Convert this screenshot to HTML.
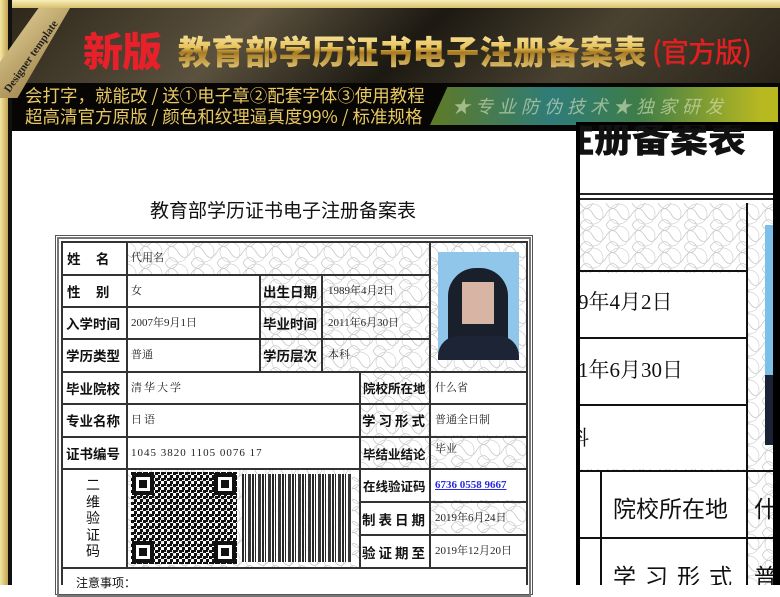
<!DOCTYPE html>
<html><head><meta charset="utf-8"><style>
*{margin:0;padding:0;box-sizing:border-box}
body{width:780px;height:585px;overflow:hidden;background:#fff;position:relative;font-family:"Liberation Sans","Noto Sans CJK SC",sans-serif}
.a{position:absolute}
.hl{position:absolute;height:2px;background:#333}
.vl{position:absolute;width:2px;background:#333}
.lb{position:absolute;font-size:13.5px;font-weight:bold;color:#111;font-family:"Noto Sans CJK SC",sans-serif;line-height:32px;white-space:nowrap}
.l5{font-size:12.5px}
.vv{position:absolute;font-size:11px;color:#222;font-family:"Liberation Serif","Noto Serif CJK SC",serif;line-height:32px;white-space:nowrap}
.gold{background:linear-gradient(#fff6c8,#e8c25a 45%,#a87a20 55%,#f4dc8a);-webkit-background-clip:text;background-clip:text;color:transparent}
</style></head><body>
<svg width="0" height="0" style="position:absolute"><defs>
<pattern id="g" width="26" height="22" patternUnits="userSpaceOnUse">
<path d="M0 11 Q6.5 0 13 11 T26 11 M0 22 Q6.5 11 13 22 T26 22 M0 0 Q6.5 11 13 0 T26 0" fill="none" stroke="#c8c8c8" stroke-width="0.8"/>
<circle cx="13" cy="11" r="10" fill="none" stroke="#d2d2d2" stroke-width="0.7"/>
</pattern>
<pattern id="q" width="6" height="6" patternUnits="userSpaceOnUse">
<rect width="3" height="3" fill="#111"/><rect x="3" y="3" width="3" height="3" fill="#111"/><rect x="3" y="0" width="2" height="2" fill="#111"/>
</pattern>
</defs></svg>

<div class="a" style="left:0;top:0;width:780px;height:131px;background:linear-gradient(135deg,#2a2418,#5b513e 30%,#1c1912 50%,#4a4231 70%,#211d15)"></div>
<div class="a" style="left:0;top:0;width:780px;height:8px;background:linear-gradient(#f8efb9,#d8c06e)"></div>
<div class="a" style="left:0;top:0;width:8px;height:585px;background:linear-gradient(90deg,#f3e7a6,#c5a650)"></div>
<div class="a" style="left:8px;top:0;width:4px;height:585px;background:#111"></div>
<div class="a" style="left:12px;top:83px;width:768px;height:48px;background:#070604"></div>
<div class="a" style="left:0;top:8px;width:70px;height:90px;background:linear-gradient(135deg,#e9d9a0,#8a6a30);clip-path:polygon(55% 0,100% 0,25% 100%,0 100%,0 60%)"></div>
<div class="a" style="left:2px;font:bold 11px 'Liberation Serif',serif;color:#222;transform:rotate(-55deg);transform-origin:left top;top:88px;white-space:nowrap">Designer template</div>
<div class="a" style="left:83px;top:24px;font:900 40px/50px 'Noto Sans CJK SC',sans-serif;color:#e8202a;letter-spacing:-1px;white-space:nowrap">新版</div>
<div class="a" style="left:178px;top:27px;font:900 33px/46px 'Noto Sans CJK SC',sans-serif;white-space:nowrap;letter-spacing:0.5px"><span class="gold">教育部学历证书电子注册备案表</span></div>
<div class="a" style="left:652px;top:31px;font:500 28px/40px 'Noto Sans CJK SC',sans-serif;color:#e02020;white-space:nowrap;letter-spacing:-1px">(官方版)</div>
<div class="a" style="left:25px;top:85px;font:17.5px/21px 'Noto Sans CJK SC',sans-serif;color:#e8c862;white-space:nowrap">会打字，就能改 / 送①电子章②配套字体③使用教程<br>超高清官方原版 / 颜色和纹理逼真度99% / 标准规格</div>
<div class="a" style="left:430px;top:87px;width:348px;height:38px;background:linear-gradient(90deg,#5f7a25,#2f7c7a 35%,#3e7c48 60%,#b8b820 95%);clip-path:polygon(5% 0,100% 0,100% 100%,0 100%);font:italic 18px/38px 'Noto Sans CJK SC',sans-serif;color:rgba(220,230,190,.6);padding-left:22px;letter-spacing:5px;white-space:nowrap">★专业防伪技术★独家研发</div>

<div class="a" style="left:12px;top:131px;width:564px;height:454px;background:#fff"></div>
<div class="a" style="left:150px;top:196px;font:19px 'Noto Sans CJK SC',sans-serif;color:#111">教育部学历证书电子注册备案表</div>
<div class="a" style="left:55px;top:235px;width:478px;height:360px;border:1px solid #555"></div>
<div class="a" style="left:57px;top:237px;width:474px;height:360px;border:2px solid #777"></div>
<svg class="a" style="left:61px;top:241px" width="467" height="344"><rect width="467" height="344" fill="url(#g)"/>
<rect x="2" y="33" width="196" height="97" fill="#fff"/><rect x="2" y="130" width="296" height="97" fill="#fff"/><rect x="2" y="2" width="64" height="31" fill="#fff"/><rect x="370" y="130" width="97" height="64" fill="#fff"/><rect x="2" y="227" width="64" height="100" fill="#fff"/><rect x="298" y="227" width="72" height="100" fill="#fff"/><rect x="370" y="227" width="97" height="32" fill="#fff"/><rect x="370" y="292" width="97" height="35" fill="#fff"/><rect x="2" y="327" width="465" height="17" fill="#fff"/>
</svg>
<div class="a" style="left:438px;top:252px;width:81px;height:108px;background:#8fc6ea;overflow:hidden">
<div class="a" style="left:10px;top:16px;width:60px;height:90px;background:#1a1f2c;border-radius:28px 28px 6px 6px"></div>
<div class="a" style="left:24px;top:30px;width:32px;height:42px;background:#d8b4a4"></div>
<div class="a" style="left:0;top:84px;width:81px;height:24px;background:#1c2436;border-radius:20px 20px 0 0"></div>
</div>
<div class="hl" style="left:61px;top:241px;width:467px"></div>
<div class="hl" style="left:61px;top:274px;width:368px"></div>
<div class="hl" style="left:61px;top:306px;width:368px"></div>
<div class="hl" style="left:61px;top:338px;width:368px"></div>
<div class="hl" style="left:61px;top:371px;width:467px"></div>
<div class="hl" style="left:61px;top:403px;width:467px"></div>
<div class="hl" style="left:61px;top:436px;width:467px"></div>
<div class="hl" style="left:61px;top:468px;width:467px"></div>
<div class="hl" style="left:359px;top:501px;width:169px"></div>
<div class="hl" style="left:359px;top:534px;width:169px"></div>
<div class="hl" style="left:61px;top:567px;width:467px"></div>
<div class="vl" style="left:61px;top:241px;height:344px"></div>
<div class="vl" style="left:526px;top:241px;height:344px"></div>
<div class="vl" style="left:126px;top:241px;height:326px"></div>
<div class="vl" style="left:259px;top:274px;height:97px"></div>
<div class="vl" style="left:321px;top:274px;height:97px"></div>
<div class="vl" style="left:429px;top:241px;height:326px"></div>
<div class="vl" style="left:359px;top:371px;height:196px"></div>
<div class="lb" style="left:67px;top:242px">姓&nbsp;&nbsp;&nbsp;&nbsp;&nbsp;名</div>
<div class="lb" style="left:67px;top:275px">性&nbsp;&nbsp;&nbsp;&nbsp;&nbsp;别</div>
<div class="lb" style="left:66px;top:307px">入学时间</div>
<div class="lb" style="left:66px;top:339px">学历类型</div>
<div class="lb" style="left:66px;top:372px">毕业院校</div>
<div class="lb" style="left:66px;top:404px">专业名称</div>
<div class="lb" style="left:66px;top:437px">证书编号</div>
<div class="lb" style="left:263px;top:275px">出生日期</div>
<div class="lb" style="left:263px;top:307px">毕业时间</div>
<div class="lb" style="left:263px;top:339px">学历层次</div>
<div class="lb l5" style="left:363px;top:372px">院校所在地</div>
<div class="lb" style="left:362px;top:404px;letter-spacing:3px">学习形式</div>
<div class="lb l5" style="left:363px;top:438px">毕结业结论</div>
<div class="lb l5" style="left:363px;top:470px">在线验证码</div>
<div class="lb" style="left:362px;top:503px;letter-spacing:3px">制表日期</div>
<div class="lb" style="left:362px;top:536px;letter-spacing:3px">验证期至</div>
<div class="a" style="left:86px;top:477px;font:14px/16.5px 'Noto Sans CJK SC',sans-serif;width:15px;color:#111">二维验证码</div>
<div class="vv" style="left:131px;top:242px">代用名</div>
<div class="vv" style="left:131px;top:275px">女</div>
<div class="vv" style="left:131px;top:307px">2007年9月1日</div>
<div class="vv" style="left:131px;top:339px">普通</div>
<div class="vv" style="left:131px;top:372px;letter-spacing:2px">清华大学</div>
<div class="vv" style="left:131px;top:404px;letter-spacing:2px">日语</div>
<div class="vv" style="left:131px;top:437px;letter-spacing:1px">1045 3820 1105 0076 17</div>
<div class="vv" style="left:328px;top:275px">1989年4月2日</div>
<div class="vv" style="left:328px;top:307px">2011年6月30日</div>
<div class="vv" style="left:328px;top:339px">本科</div>
<div class="vv" style="left:435px;top:372px">什么省</div>
<div class="vv" style="left:435px;top:404px">普通全日制</div>
<div class="vv" style="left:435px;top:434px;line-height:30px">毕业</div>
<div class="vv" style="left:435px;top:469px;color:#2a2ae0;font-weight:bold;text-decoration:underline">6736 0558 9667</div>
<div class="vv" style="left:435px;top:502px">2019年6月24日</div>
<div class="vv" style="left:435px;top:535px">2019年12月20日</div>
<svg class="a" style="left:131px;top:472px" width="106" height="92"><rect width="106" height="92" fill="url(#q)"/>
<rect x="1" y="1" width="22" height="22" fill="#111"/><rect x="5" y="5" width="14" height="14" fill="#fff"/><rect x="8" y="8" width="8" height="8" fill="#111"/>
<rect x="83" y="1" width="22" height="22" fill="#111"/><rect x="87" y="5" width="14" height="14" fill="#fff"/><rect x="90" y="8" width="8" height="8" fill="#111"/>
<rect x="1" y="69" width="22" height="22" fill="#111"/><rect x="5" y="73" width="14" height="14" fill="#fff"/><rect x="8" y="76" width="8" height="8" fill="#111"/>
<rect x="83" y="69" width="22" height="22" fill="#111"/><rect x="87" y="73" width="14" height="14" fill="#fff"/><rect x="90" y="76" width="8" height="8" fill="#111"/></svg>
<div class="a" style="left:242px;top:474px;width:110px;height:88px;background:repeating-linear-gradient(90deg,#111 0 2px,#fff 2px 3px,#111 3px 4px,#fff 4px 6px,#222 6px 9px,#fff 9px 10px),#fff;opacity:.9"></div>
<div class="a" style="left:76px;top:574px;font:12px 'Noto Sans CJK SC',sans-serif;color:#111">注意事项：</div>

<div class="a" style="left:576px;top:122px;width:4px;height:463px;background:#000"></div>
<div class="a" style="left:773px;top:122px;width:7px;height:463px;background:#000"></div>
<div class="a" style="left:576px;top:122px;width:204px;height:3px;background:#000"></div>
<div class="a" style="left:580px;top:125px;width:193px;height:460px;overflow:hidden">
<div class="a" style="left:-24px;top:-17px;font:900 38px 'Noto Sans CJK SC',sans-serif;color:#111;white-space:nowrap">注册备案表</div>
<div class="a" style="left:0;top:68px;width:193px;height:2px;background:#222"></div>
<div class="a" style="left:0;top:73px;width:193px;height:2px;background:#222"></div>
<svg class="a" style="left:0;top:78px" width="193" height="390"><rect width="193" height="390" fill="url(#g)"/><rect x="0" y="70" width="166" height="196" fill="#fff"/><rect x="0" y="267" width="166" height="130" fill="#fff"/></svg>
<div class="a" style="left:166px;top:78px;width:2px;height:390px;background:#111"></div>
<div class="a" style="left:0;top:145px;width:168px;height:2px;background:#111"></div>
<div class="a" style="left:0;top:212px;width:168px;height:2px;background:#111"></div>
<div class="a" style="left:0;top:279px;width:168px;height:2px;background:#111"></div>
<div class="a" style="left:0;top:345px;width:193px;height:2px;background:#111"></div>
<div class="a" style="left:0;top:412px;width:193px;height:2px;background:#111"></div>
<div class="a" style="left:20px;top:345px;width:2px;height:120px;background:#111"></div>
<div class="a" style="left:185px;top:100px;width:8px;height:220px;background:#7cc0ea"></div>
<div class="a" style="left:185px;top:250px;width:8px;height:70px;background:#1b2235"></div>
<div class="a" style="left:-2px;top:161px;font:21px 'Liberation Serif','Noto Serif CJK SC',serif;color:#111;white-space:nowrap">9年4月2日</div>
<div class="a" style="left:-2px;top:229px;font:21px 'Liberation Serif','Noto Serif CJK SC',serif;color:#111;white-space:nowrap">1年6月30日</div>
<div class="a" style="left:-12px;top:297px;font:21px 'Noto Serif CJK SC',serif;color:#111">科</div>
<div class="a" style="left:33px;top:365px;font:23px 'Noto Sans CJK SC',sans-serif;color:#111;white-space:nowrap">院校所在地</div>
<div class="a" style="left:174px;top:365px;font:23px 'Noto Sans CJK SC',sans-serif;color:#111">什</div>
<div class="a" style="left:33px;top:433px;font:23px 'Noto Sans CJK SC',sans-serif;color:#111;letter-spacing:9px;white-space:nowrap">学习形式</div>
<div class="a" style="left:174px;top:433px;font:23px 'Noto Sans CJK SC',sans-serif;color:#111">普</div>
</div>
</body></html>
